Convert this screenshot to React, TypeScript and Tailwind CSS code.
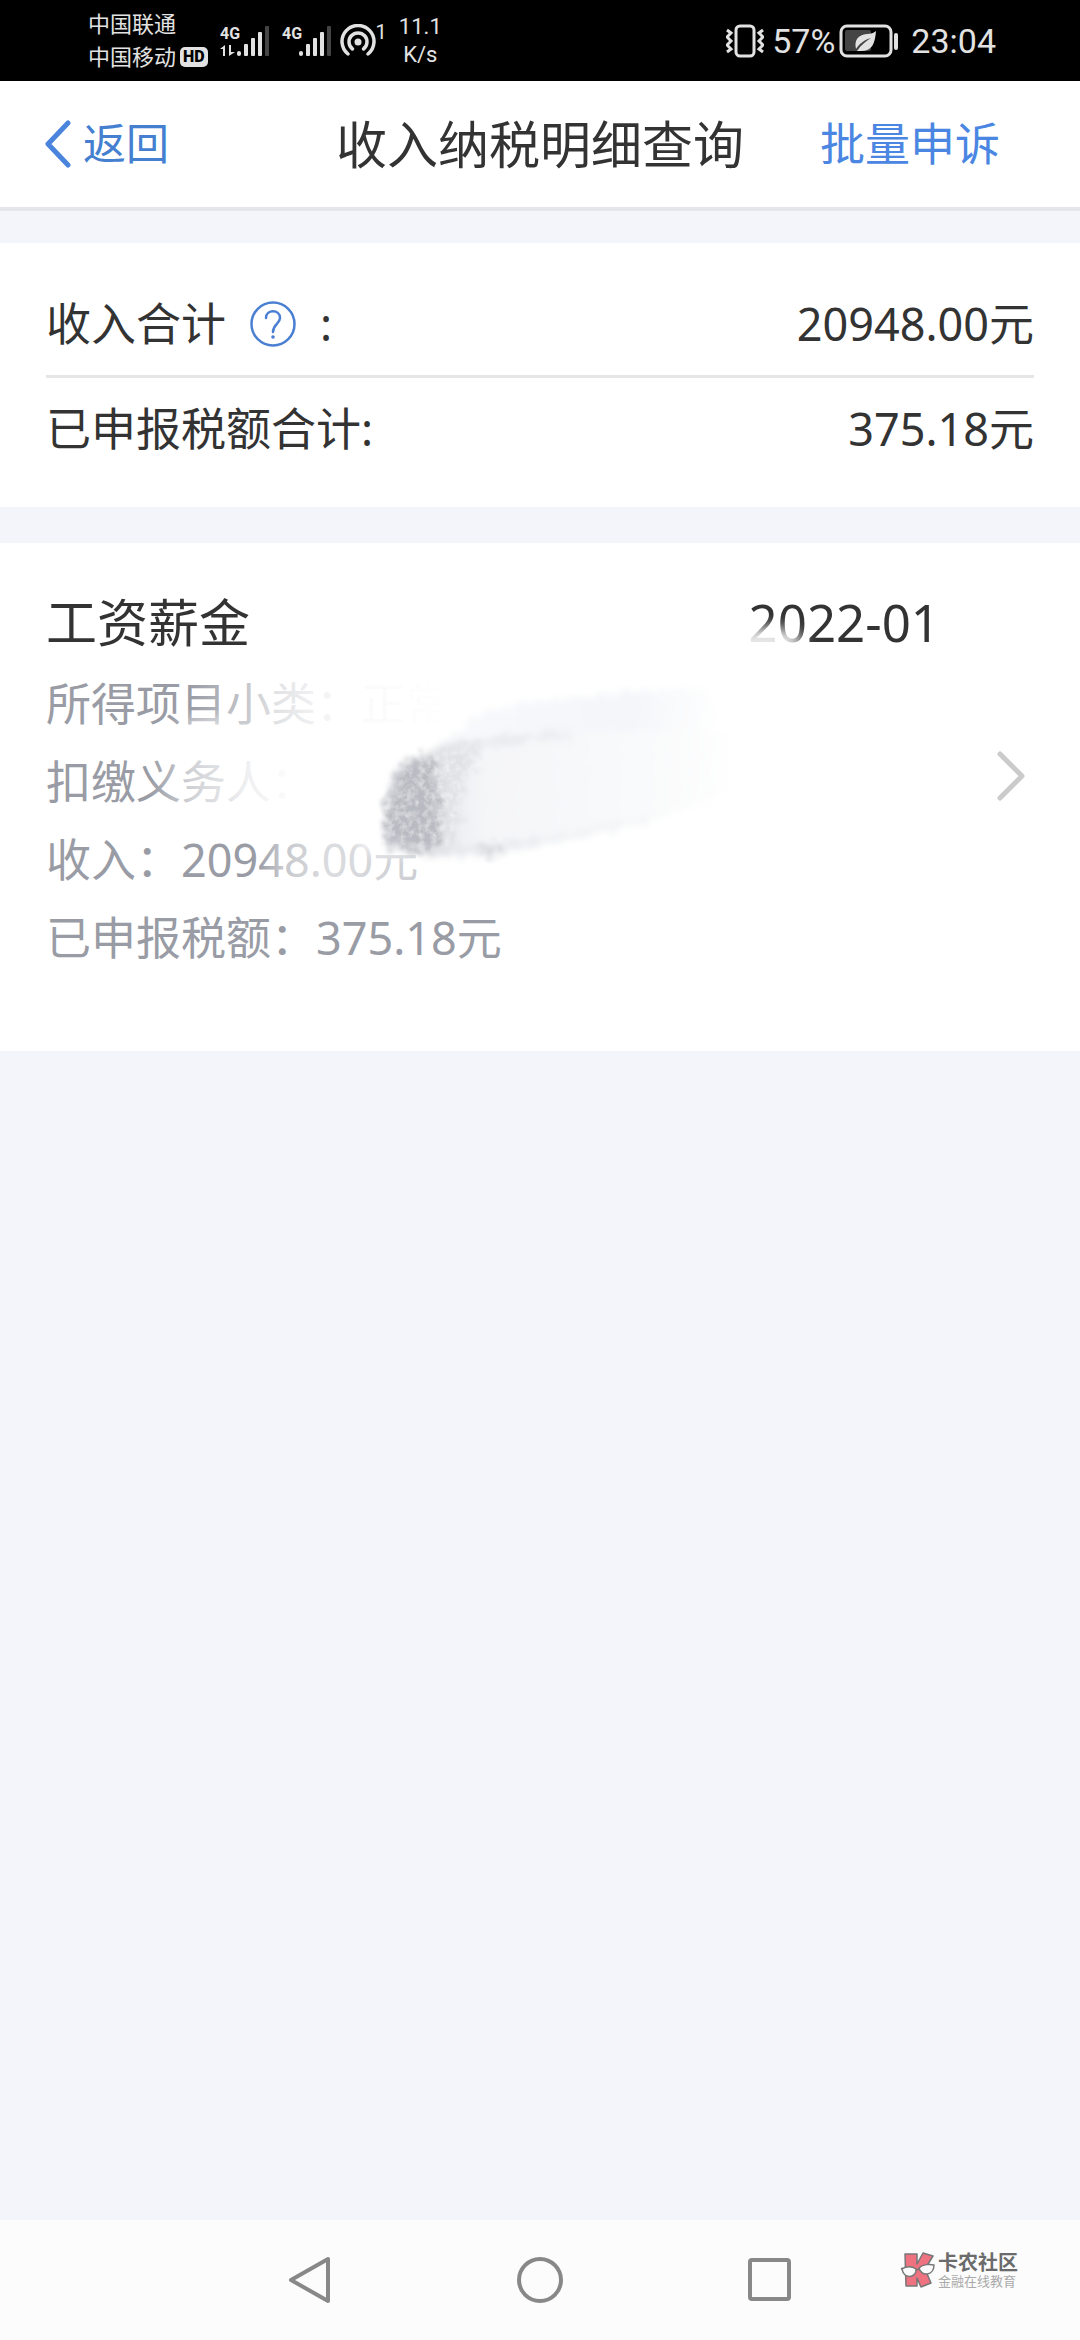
import React from "react";

const details = [
  { label: "所得项目小类", value: "正常工资薪金" },
  { label: "扣缴义务人", value: "" },
  { label: "收入", value: "20948.00元" },
  { label: "已申报税额", value: "375.18元" },
];

function Signal({ data }: { data?: boolean }) {
  return (
    <svg width="50" height="48" viewBox="0 -8 50 48" fill="#e2e2e2">
      <text x="0" y="14" fontSize="16" fontWeight="700" className="font-['Roboto']">
        4G
      </text>
      {data && (
        <path d="M0 24 L5 20 V31 H3 V24 Z M9 20 H11 V27 H15 L9 31 Z" />
      )}
      <rect x="17" y="26" width="4" height="5" rx="2" />
      <rect x="24" y="19" width="4" height="12" rx="1" />
      <rect x="31" y="13" width="4" height="18" rx="1" />
      <rect x="38" y="7" width="4" height="24" rx="1" />
      <rect x="45" y="1" width="4" height="30" rx="1" fill="#444" />
    </svg>
  );
}

function StatusBar() {
  return (
    <div className="flex h-[81px] items-center justify-between bg-black pl-[88px] pr-[84px] font-['Roboto','Noto_Sans_CJK_SC',sans-serif] text-[#e2e2e2]">
      <div className="flex items-center">
        <div className="text-[22px] leading-[33px]">
          <div>中国联通</div>
          <div className="flex items-center gap-1">
            中国移动
            <span className="rounded-[5px] bg-[#e2e2e2] px-[3px] text-[16px] font-black leading-[20px] text-black">
              HD
            </span>
          </div>
        </div>
        <div className="ml-3 flex items-center gap-3">
          <Signal data />
          <Signal />
        </div>
        <svg className="ml-2" width="36" height="34" viewBox="0 0 36 34" fill="none" stroke="#e2e2e2" strokeWidth="3.500">
          <path d="M8 30 A16 16 0 1 1 28 30" strokeLinecap="round" />
          <path d="M12.500 25 A9 9 0 1 1 23.500 25" strokeLinecap="round" />
          <circle cx="18" cy="18" r="3.500" fill="#e2e2e2" stroke="none" />
        </svg>
        <span className="self-start pt-3 text-[20px] leading-[24px]">1</span>
        <div className="ml-3 text-center text-[22px] leading-[28px]">
          <div>11.1</div>
          <div>K/s</div>
        </div>
      </div>

      <div className="flex items-center text-[34px] leading-[40px]">
        <svg width="38" height="34" viewBox="0 0 38 34" fill="none" stroke="#e2e2e2" strokeWidth="3">
          <rect x="10" y="2" width="18" height="30" rx="4" />
          <path d="M1 6 L5 9 L1 13 L5 17 L1 21 L5 25 L1 28" strokeWidth="3" />
          <path d="M37 6 L33 9 L37 13 L33 17 L37 21 L33 25 L37 28" strokeWidth="3" />
        </svg>
        <span className="ml-2">57%</span>
        <svg className="ml-1" width="60" height="34" viewBox="0 0 60 34">
          <rect x="2" y="2" width="50" height="30" rx="6" fill="none" stroke="#e2e2e2" strokeWidth="3" />
          <rect x="6" y="6" width="26" height="21" rx="2" fill="#444" />
          <path
            d="M37 7 C36 20 33 27 22 27 L18 27 C22 21 27 17 32 14 C25 16 20 20 17 25 C15 16 19 11 28 10 C32 10 35 9 37 7 Z"
            fill="#e2e2e2"
          />
          <rect x="55" y="9" width="4" height="17" rx="2" fill="#e2e2e2" />
        </svg>
        <span className="ml-3">23:04</span>
      </div>
    </div>
  );
}

function Header() {
  return (
    <header className="grid h-[130px] grid-cols-[1fr_auto_1fr] items-center border-b-4 border-[#e4e6eb] bg-white text-[45px]">
      <button type="button" className="flex items-center gap-3 pl-11 text-[43px] text-[#447fd0]">
        <svg width="27" height="48" viewBox="0 0 27 48" fill="none" stroke="#4a84dd" strokeWidth="5">
          <path d="M24 3 L4 24 L24 45" strokeLinecap="round" strokeLinejoin="round" />
        </svg>
        返回
      </button>
      <h1 className="text-[51px]">收入纳税明细查询</h1>
      <button type="button" className="justify-self-end pr-20 text-[#4a86e2]">
        批量申诉
      </button>
    </header>
  );
}

function Summary() {
  return (
    <section className="bg-white px-[46px] pb-[27px] pt-[30px] text-[45px] leading-[102px]">
      <div className="flex justify-between border-b-[3px] border-[#e6e6e6]">
        <div className="flex items-center gap-6">
          收入合计
          <button type="button" aria-label="收入合计说明">
            <svg width="46" height="46" viewBox="0 0 46 46" fill="none" stroke="#4a7fd2" strokeWidth="2.500">
              <circle cx="23" cy="23" r="21.500" />
              <path d="M16 17 C16 8 30 8 30 17 C30 23 23 23 23 31" strokeLinecap="round" />
              <circle cx="23" cy="36" r="1.800" fill="#4a7fd2" stroke="none" />
            </svg>
          </button>
          <span>:</span>
        </div>
        <span>20948.00元</span>
      </div>
      <div className="flex justify-between">
        <span>已申报税额合计:</span>
        <span>375.18元</span>
      </div>
    </section>
  );
}

// White brush strokes and the grey smear lying over the private fields
function Smudge() {
  return (
    <svg
      className="pointer-events-none absolute left-0 top-0"
      width="1080"
      height="508"
      viewBox="0 0 1080 508"
      aria-hidden="true"
    >
      <defs>
        <linearGradient id="fade1" gradientUnits="userSpaceOnUse" x1="190" y1="0" x2="450" y2="0">
          <stop offset="0" stopColor="#fff" stopOpacity="0" />
          <stop offset="0.2" stopColor="#fff" stopOpacity="0.4" />
          <stop offset="0.34" stopColor="#fff" stopOpacity="0.72" />
          <stop offset="0.5" stopColor="#fff" stopOpacity="0.88" />
          <stop offset="0.65" stopColor="#fff" stopOpacity="0.95" />
          <stop offset="1" stopColor="#fff" stopOpacity="1" />
        </linearGradient>
        <linearGradient id="fade2" gradientUnits="userSpaceOnUse" x1="150" y1="0" x2="290" y2="0">
          <stop offset="0" stopColor="#fff" stopOpacity="0" />
          <stop offset="0.3" stopColor="#fff" stopOpacity="0.55" />
          <stop offset="0.7" stopColor="#fff" stopOpacity="0.85" />
          <stop offset="1" stopColor="#fff" stopOpacity="0.97" />
        </linearGradient>
        <linearGradient id="fade3" gradientUnits="userSpaceOnUse" x1="258" y1="0" x2="420" y2="0">
          <stop offset="0" stopColor="#fff" stopOpacity="0" />
          <stop offset="0.15" stopColor="#fff" stopOpacity="0.45" />
          <stop offset="0.45" stopColor="#fff" stopOpacity="0.65" />
          <stop offset="1" stopColor="#fff" stopOpacity="0.5" />
        </linearGradient>
        <linearGradient id="body" gradientUnits="userSpaceOnUse" x1="380" y1="0" x2="740" y2="0">
          <stop offset="0" stopColor="#d9dbe0" />
          <stop offset="0.15" stopColor="#eaebee" />
          <stop offset="0.3" stopColor="#f5f6f8" />
          <stop offset="0.75" stopColor="#f9fafb" />
          <stop offset="1" stopColor="#fff" />
        </linearGradient>
        <linearGradient id="upper" gradientUnits="userSpaceOnUse" x1="430" y1="0" x2="720" y2="0">
          <stop offset="0" stopColor="#f8f9fb" />
          <stop offset="0.7" stopColor="#f4f6f9" />
          <stop offset="1" stopColor="#fff" />
        </linearGradient>
        <linearGradient id="rim" gradientUnits="userSpaceOnUse" x1="420" y1="0" x2="680" y2="0">
          <stop offset="0" stopColor="#dcdee2" />
          <stop offset="0.5" stopColor="#edeff2" />
          <stop offset="1" stopColor="#f8f9fa" />
        </linearGradient>
        <filter id="soft" x="-20%" y="-40%" width="140%" height="180%">
          <feGaussianBlur stdDeviation="7" />
        </filter>
        <filter id="rough" x="-10%" y="-20%" width="120%" height="140%">
          <feTurbulence type="fractalNoise" baseFrequency="0.12" numOctaves="3" seed="4" result="noise" />
          <feDisplacementMap in="SourceGraphic" in2="noise" scale="20" xChannelSelector="R" yChannelSelector="G" result="torn" />
          <feGaussianBlur in="torn" stdDeviation="3" />
        </filter>
        <filter id="grain" x="-20%" y="-20%" width="140%" height="140%">
          <feTurbulence type="fractalNoise" baseFrequency="0.16" numOctaves="3" seed="9" result="noise" />
          <feDisplacementMap in="SourceGraphic" in2="noise" scale="34" xChannelSelector="R" yChannelSelector="G" result="torn" />
          <feGaussianBlur in="torn" stdDeviation="2" result="edge" />
          <feColorMatrix in="noise" type="matrix" values="0 0 0 0 1  0 0 0 0 1  0 0 0 0 1  0 0 0 1 -0.400" result="specks" />
          <feComposite in="specks" in2="edge" operator="in" result="inside" />
          <feMerge>
            <feMergeNode in="edge" />
            <feMergeNode in="inside" />
          </feMerge>
        </filter>
      </defs>

      <rect x="190" y="124" width="500" height="76" fill="url(#fade1)" />
      <rect x="150" y="202" width="300" height="76" fill="url(#fade2)" />
      <rect x="258" y="282" width="170" height="74" fill="url(#fade3)" />
      <ellipse cx="210" cy="182" rx="34" ry="8" fill="#fff" opacity="0.6" filter="url(#soft)" />
      <ellipse cx="395" cy="296" rx="40" ry="14" fill="#fff" filter="url(#soft)" />
      <ellipse cx="764" cy="98" rx="40" ry="14" fill="#fff" opacity="0.9" filter="url(#soft)" />

      <g filter="url(#rough)">
        <path d="M440 200 L484 170 C560 152 640 146 700 146 L724 156 L726 196 L440 212 Z" fill="url(#upper)" />
        <path
          d="M390 240 C396 224 416 216 434 206 C500 194 600 188 736 186 L738 246 C716 258 680 268 640 280 C590 294 540 306 490 313 C450 316 410 312 388 304 Z"
          fill="url(#body)"
        />
        <path d="M436 208 C480 198 520 196 570 192" fill="none" stroke="url(#rim)" strokeWidth="8" />
        <path d="M430 306 C500 310 560 296 660 272" fill="none" stroke="url(#rim)" strokeWidth="7" />
      </g>
      <g filter="url(#grain)">
        <path d="M434 208 L484 204 L462 240 L454 304 L436 306 Z" fill="#e1e2e6" />
        <path d="M402 224 L432 212 L440 250 L440 306 L412 306 L386 300 L386 262 Z" fill="#b9bbc2" />
        <path d="M482 306 L502 304 L504 309 L482 312 Z" fill="#c9cbd0" />
      </g>
    </svg>
  );
}

function RecordCard() {
  return (
    <section className="relative bg-white px-[46px] pb-[74px] pt-10">
      <div className="flex items-center gap-12">
        <div className="flex-1">
          <div className="mb-1 flex justify-between text-[51px] leading-[78px]">
            <h2>工资薪金</h2>
            <time dateTime="2022-01">2022-01</time>
          </div>
          {details.map((item) => (
            <p key={item.label} className="text-[45px] leading-[78px] text-[#999ca5]">
              {item.label}：{item.value}
            </p>
          ))}
        </div>
        <button type="button" aria-label="查看明细" className="flex w-[46px] justify-center pb-2">
          <svg width="28" height="50" viewBox="0 0 28 50" fill="none" stroke="#cbcbcb" strokeWidth="5">
            <path d="M3 3 L25 25 L3 47" strokeLinecap="round" strokeLinejoin="round" />
          </svg>
        </button>
      </div>
      <Smudge />
    </section>
  );
}

function Watermark() {
  return (
    <div className="absolute right-[62px] top-8 flex items-center gap-[3px]">
      <svg width="35" height="36" viewBox="0 0 35 36" stroke="#777" strokeWidth="1.500" strokeLinejoin="round">
        <path d="M5 2 H17 V12 L23 1 L33 4 L25 17 L31 31 L21 35 L17 26 L17 34 H6 Z" fill="#ee7280" />
        <path d="M2 17 C6 14 12 14 16 17 C17 26 4 28 2 17 Z" fill="#fcfcfc" />
        <path d="M19 16 C23 12 30 12 34 13 C34 24 21 25 19 16 Z" fill="#fcfcfc" />
        <path d="M16 18 L19 17 M1 17 L3 16" fill="none" />
      </svg>
      <div>
        <div className="text-[20px] font-bold leading-[22px] text-[#6b6b6b]">卡农社区</div>
        <div className="text-[13px] leading-[14px] text-[#aaa]">金融在线教育</div>
      </div>
    </div>
  );
}

function NavBar() {
  return (
    <nav className="relative flex h-[120px] items-center justify-center gap-[184px] bg-[#fcfcfc]">
      <button type="button" aria-label="返回">
        <svg width="46" height="48" viewBox="0 0 46 48" fill="none" stroke="#888" strokeWidth="4">
          <path d="M41 3 V45 L4 24 Z" strokeLinejoin="round" />
        </svg>
      </button>
      <button type="button" aria-label="主页">
        <svg width="46" height="48" viewBox="0 0 46 48" fill="none" stroke="#888" strokeWidth="4">
          <circle cx="23" cy="24" r="21" />
        </svg>
      </button>
      <button type="button" aria-label="最近任务">
        <svg width="46" height="48" viewBox="0 0 46 48" fill="none" stroke="#888" strokeWidth="4">
          <rect x="3" y="4" width="39" height="39" rx="2" />
        </svg>
      </button>
      <Watermark />
    </nav>
  );
}

export default function App() {
  return (
    <div className="flex min-h-screen flex-col bg-[#f3f5fa] font-['Noto_Sans','Noto_Sans_CJK_SC',sans-serif] text-[#333]">
      <StatusBar />
      <Header />
      <main className="flex flex-1 flex-col gap-9 pt-8">
        <Summary />
        <RecordCard />
      </main>
      <NavBar />
    </div>
  );
}
